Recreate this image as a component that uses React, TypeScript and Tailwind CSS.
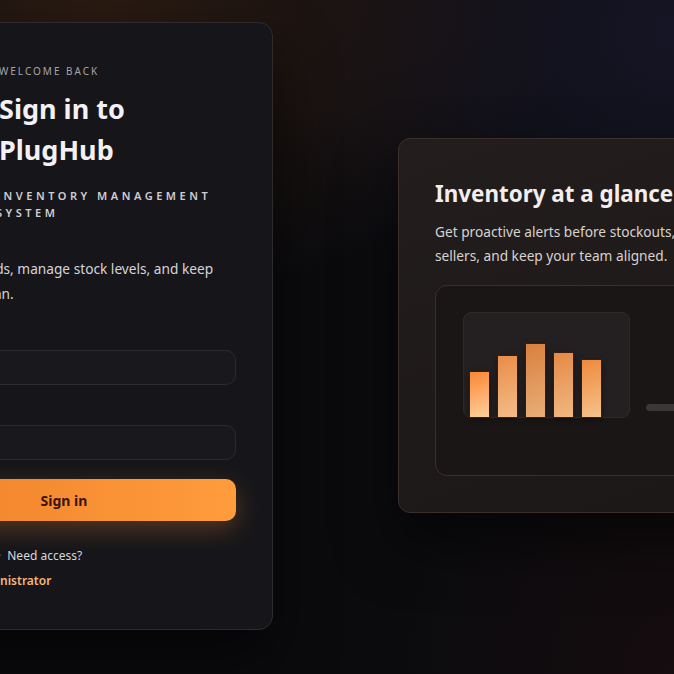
import React from "react";

const bars = [
  { h: 45, bg: "bg-[linear-gradient(160deg,#fb8634,#ffd09c)]" },
  { h: 61, bg: "bg-[linear-gradient(160deg,#ea8c48,#f3bd88)]" },
  { h: 73, bg: "bg-[linear-gradient(160deg,#d9803e,#e8ae78)]" },
  { h: 64, bg: "bg-[linear-gradient(160deg,#e48946,#f1b882)]" },
  { h: 57, bg: "bg-[linear-gradient(160deg,#ee8a3c,#f6c28c)]" },
];

export default function App() {
  return (
    <div className="w-[674px] h-[674px] overflow-hidden bg-[#0b0b0e] bg-[radial-gradient(ellipse_70%_45%_at_15%_0%,rgba(100,55,25,0.35),transparent),radial-gradient(ellipse_60%_50%_at_100%_5%,rgba(40,40,80,0.35),transparent),radial-gradient(ellipse_40%_50%_at_100%_100%,rgba(70,20,20,0.18),transparent)] font-['Noto_Sans',sans-serif]">
      <div className="flex items-start ml-[-146px] gap-[125px]">
        {/* Sign-in card */}
        <div className="shrink-0 w-[419px] h-[608px] mt-[22px] rounded-[14px] border border-[#2f2b2d] bg-[#16161a] pl-[37px] pr-[36px] pt-[40px] shadow-[0_30px_60px_rgba(0,0,0,0.55)]">
          <div className="flex gap-[19px]">
            <div className="w-[88px] h-[88px] shrink-0 rounded-2xl bg-[#1f1d22]" />
            <div>
              <p className="text-[10px] leading-[16px] tracking-[0.2em] text-[#a6a4aa] uppercase">
                Welcome back
              </p>
              <h1 className="mt-[9px] text-[27px] leading-[41px] font-bold text-[#f3f1f4]">
                Sign in to
                <br />
                PlugHub
              </h1>
              <p className="mt-[17px] ml-[-3px] text-[11px] leading-[17px] font-semibold tracking-[0.32em] text-[#cfcdd3]">
                INVENTORY MANAGEMENT
                <br />
                SYSTEM
              </p>
            </div>
          </div>
          <p className="mt-[35px] text-[13.7px] leading-[25px] text-[#d6d4da]">
            Check dashboards, manage stock levels, and keep
            <br />
            your team on plan.
          </p>
          <div className="mt-[16px] flex flex-col">
            <label className="text-[13px] leading-[20px] text-[#bdbbc2]">Email</label>
            <input
              className="mt-[8px] h-[35px] w-full rounded-[10px] border border-[#2c2a2e] bg-[#19181c] outline-none"
              type="email"
            />
            <label className="mt-[12px] text-[13px] leading-[20px] text-[#bdbbc2]">Password</label>
            <input
              className="mt-[8px] h-[35px] w-full rounded-[10px] border border-[#2c2a2e] bg-[#19181c] outline-none"
              type="password"
            />
            <button className="mt-[19px] h-[42px] w-full rounded-[10px] bg-[linear-gradient(90deg,#ef7f2a,#ff9c3c)] text-[14px] font-bold text-[#3b1408] shadow-[0_8px_24px_rgba(255,140,50,0.28)]">
              Sign in
            </button>
          </div>
          <div className="mt-[22px] text-[12px] leading-[25px] text-[#d8d6dc]">
            <p className="flex gap-[6px]">
              <span>Forgot password?</span>
              <span className="text-[#8a888e]">·</span>
              <span>Need access?</span>
            </p>
            <p className="font-semibold text-[#f4b77c]">Contact your administrator</p>
          </div>
        </div>

        {/* Preview card */}
        <div className="shrink-0 w-[420px] h-[375px] mt-[138px] rounded-[12px] border border-[#3a2f2b] bg-[linear-gradient(160deg,#231e1d,#1a1716)] px-[36px] pt-[40px] shadow-[0_30px_60px_rgba(0,0,0,0.5)]">
          <h2 className="text-[22.4px] leading-[30px] font-bold text-[#f2eef0]">Inventory at a glance</h2>
          <p className="mt-[11px] text-[13.7px] leading-[24px] text-[#d8d2d0]">
            Get proactive alerts before stockouts, highlight best
            <br />
            sellers, and keep your team aligned.
          </p>
          <div className="mt-[17px] h-[191px] rounded-[12px] border border-[#3a2f2b] bg-[#1a1615] pl-[27px] pt-[26px] flex items-start gap-[16px]">
            <div className="shrink-0 w-[167px] h-[106px] rounded-[8px] border border-[#2f2a29] bg-[#242021] flex items-end gap-[9px] px-[6px]">
              {bars.map((b, i) => (
                <div
                  key={i}
                  className={`w-[19px] ${b.bg} shadow-[0_0_0_1px_rgba(70,30,8,0.7),0_2px_6px_rgba(0,0,0,0.5)]`}
                  style={{ height: b.h }}
                />
              ))}
            </div>
            <div className="shrink-0 mt-[92px] h-[7px] w-[80px] rounded-full bg-[#3a3737]" />
          </div>
        </div>
      </div>
    </div>
  );
}
